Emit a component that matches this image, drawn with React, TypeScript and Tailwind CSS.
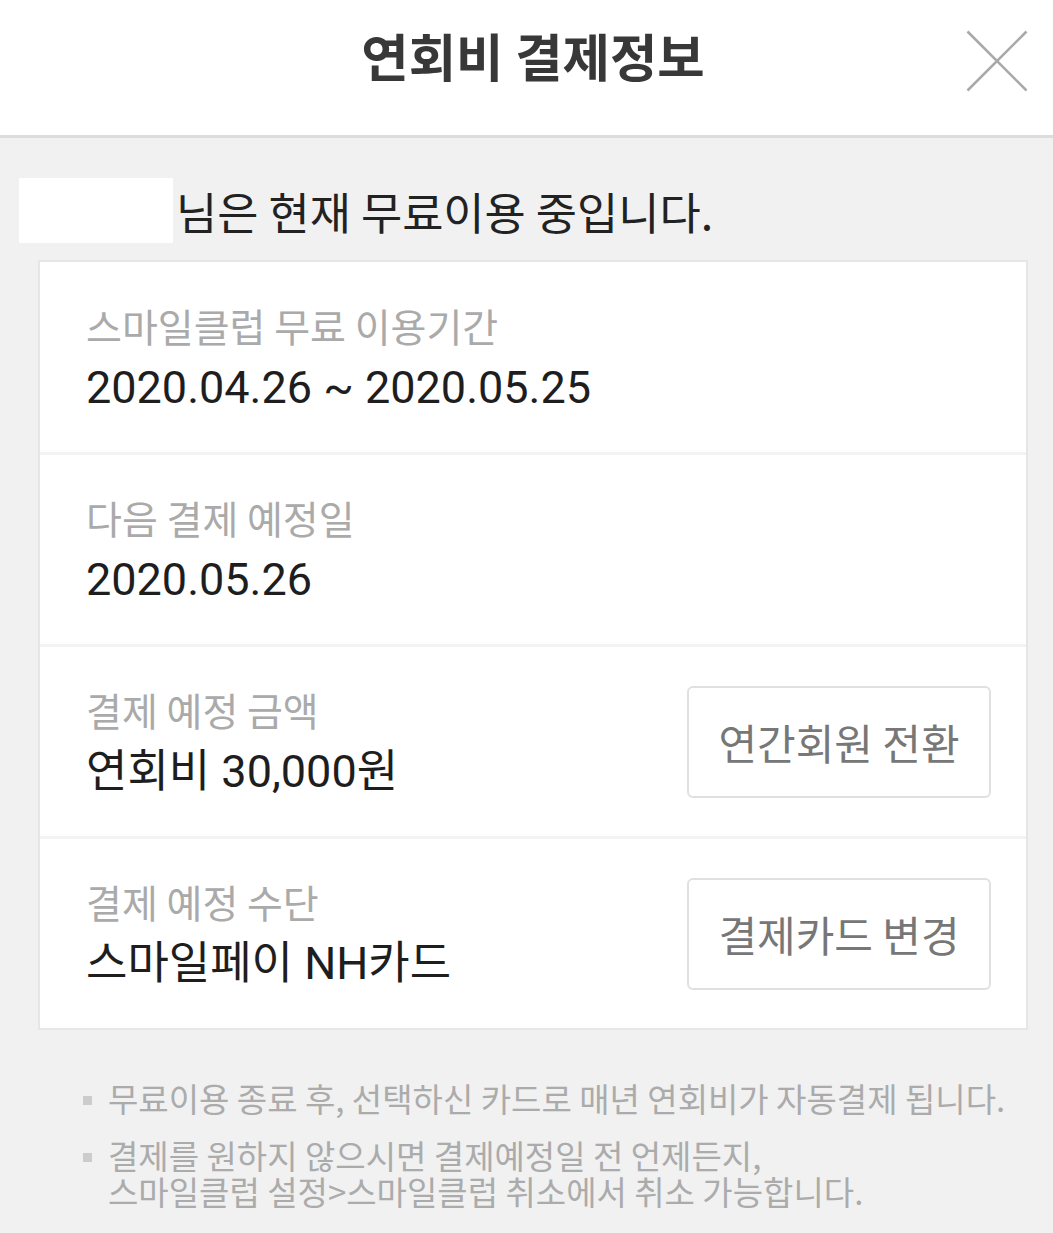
import React from "react";

const KR = "font-['Noto_Sans_CJK_KR',sans-serif]";
const RB = "font-['Roboto','Noto_Sans_CJK_KR',sans-serif]";

function Row({
  label,
  value,
  button,
  first,
}: {
  label: string;
  value: string;
  button?: string;
  first?: boolean;
}) {
  return (
    <div
      className={`flex items-center pl-[46px] pr-[35px] ${
        first ? "h-[190px]" : "h-[192px] border-t-[3px] border-[#f3f3f3]"
      }`}
    >
      <div className="flex flex-1 flex-col">
        <div className={`${KR} text-[39px] leading-[60px] text-[#aaaaaa] whitespace-nowrap`}>{label}</div>
        <div className={`${RB} text-[45px] leading-[65px] text-[#1e1e1e] whitespace-nowrap`}>{value}</div>
      </div>
      {button && (
        <div
          className={`${KR} flex h-[112px] w-[304px] items-center justify-center rounded-[6px] border-2 border-[#e0e0e0] bg-white text-[42px] leading-none text-[#777777]`}
        >
          {button}
        </div>
      )}
    </div>
  );
}

export default function App() {
  return (
    <div className="min-h-[1233px] w-[1053px] bg-[#f1f1f1]">
      {/* Header */}
      <div className="grid h-[138px] grid-cols-[120px_1fr_120px] border-b-[3px] border-[#dcdcdc] bg-white">
        <div />
        <div
          className={`${KR} pl-[13px] pt-[29px] text-center text-[51.5px] font-bold leading-[52px] text-[#383838] whitespace-nowrap`}
        >
          연회비 결제정보
        </div>
        <div className="flex justify-end pr-[25px] pt-[30px]">
          <svg width="62" height="62" viewBox="0 0 62 62" fill="none">
            <path d="M1.5 1.5 L60.5 60.5 M60.5 1.5 L1.5 60.5" stroke="#a9a9a9" strokeWidth="2.6" />
          </svg>
        </div>
      </div>

      {/* Greeting */}
      <div className="flex items-center pl-[19px] pt-[40px]">
        <div className="h-[65px] w-[154px] bg-white" />
        <div className={`${KR} ml-[3px] text-[44.8px] leading-[65px] text-[#222222] whitespace-nowrap`}>
          님은 현재 무료이용 중입니다.
        </div>
      </div>

      {/* Card */}
      <div className="ml-[38px] mt-[17px] w-[990px] border-2 border-[#e6e6e6] bg-white">
        <Row label="스마일클럽 무료 이용기간" value="2020.04.26 ~ 2020.05.25" first />
        <Row label="다음 결제 예정일" value="2020.05.26" />
        <Row label="결제 예정 금액" value="연회비 30,000원" button="연간회원 전환" />
        <Row label="결제 예정 수단" value="스마일페이 NH카드" button="결제카드 변경" />
      </div>

      {/* Notes */}
      <div className={`${KR} flex flex-col gap-[21px] pl-[83px] pt-[50px] text-[33px] leading-[36px] text-[#ababab]`}>
        <div className="flex">
          <div className="mt-[16px] mr-[16px] h-[9px] w-[9px] shrink-0 bg-[#cccccc]" />
          <div className="whitespace-nowrap">무료이용 종료 후, 선택하신 카드로 매년 연회비가 자동결제 됩니다.</div>
        </div>
        <div className="flex">
          <div className="mt-[16px] mr-[16px] h-[9px] w-[9px] shrink-0 bg-[#cccccc]" />
          <div className="flex flex-col whitespace-nowrap">
            <div>결제를 원하지 않으시면 결제예정일 전 언제든지,</div>
            <div>스마일클럽 설정&gt;스마일클럽 취소에서 취소 가능합니다.</div>
          </div>
        </div>
      </div>
    </div>
  );
}
